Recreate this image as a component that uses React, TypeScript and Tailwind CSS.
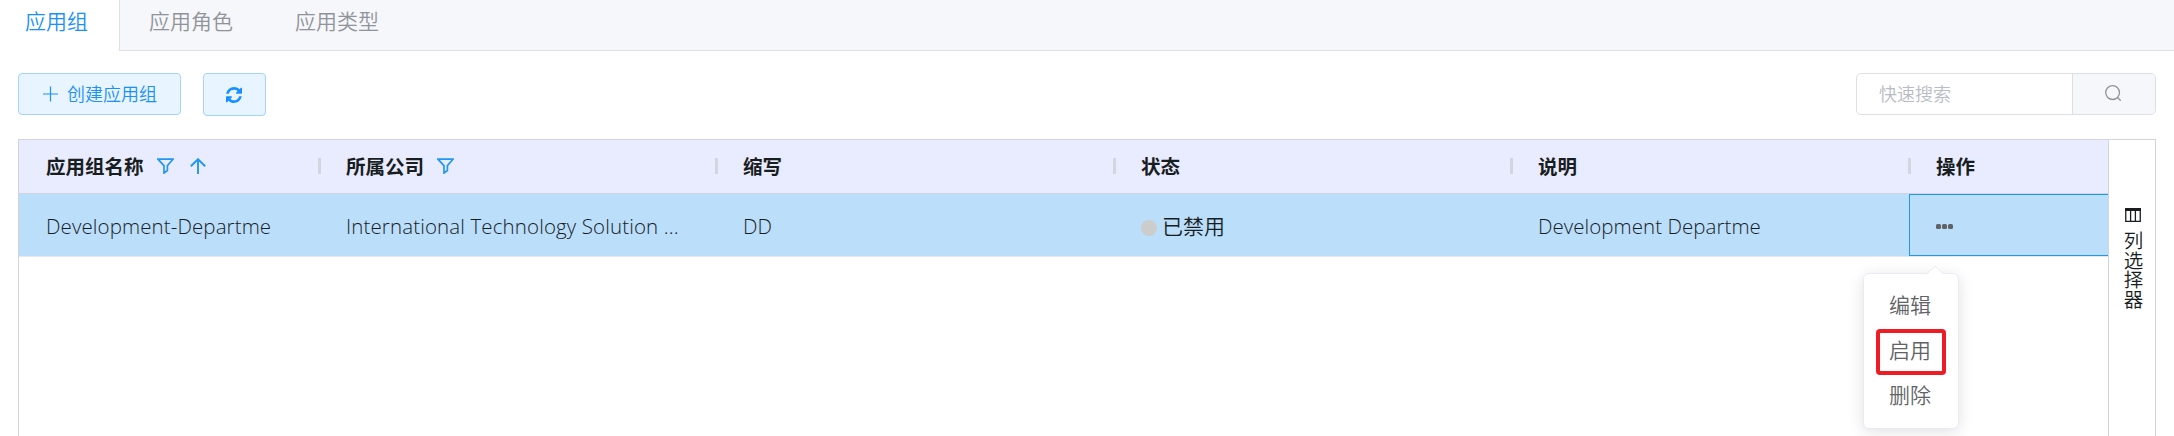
import type { ReactNode } from "react";

const latin = "font-['Open_Sans','Noto_Sans_CJK_SC',sans-serif]";

function FilterIcon() {
  return (
    <svg className="h-4 w-[17px]" viewBox="0 0 17 16" fill="none" stroke="#2196f3" strokeWidth="1.700">
      <path d="M1 1.200h15L10.400 7.600v4.900L7 15V7.600z" />
    </svg>
  );
}

function SortIcon() {
  return (
    <svg className="h-4 w-4" viewBox="0 0 16 16" fill="none" stroke="#2196f3" strokeWidth="1.900">
      <path d="M8 16V1.300M.8 8.300 8 1.200l7.200 7.100" />
    </svg>
  );
}

function RefreshIcon() {
  return (
    <svg className="mr-0.5 h-4 w-4" viewBox="0 0 1536 1536" fill="#1890ff">
      <path d="M1511 928q0 5-1 7-64 268-268 434.500T764 1536q-146 0-282.500-55T238 1324l-129 129q-19 19-45 19t-45-19-19-45V960q0-26 19-45t45-19h448q26 0 45 19t19 45-19 45l-137 137q71 66 161 102t187 36q134 0 250-65t186-179q11-17 53-117 8-23 30-23h192q13 0 22.500 9.500t9.500 22.500zm25-800v448q0 26-19 45t-45 19h-448q-26 0-45-19t-19-45 19-45l138-138Q969 256 768 256q-134 0-250 65T332 500q-11 17-53 117-8 23-30 23H50q-13 0-22.500-9.500T18 608v-7q65-268 270-434.500T768 0q146 0 284 55.500T1297 212l130-129q19-19 45-19t45 19 19 45z" />
    </svg>
  );
}

function HeaderCell({ label, width, pad = "pl-[26px]", children }: { label: string; width: string; pad?: string; children?: ReactNode }) {
  return (
    <div className={`flex shrink-0 items-start justify-between ${width}`}>
      <div className={`flex pt-[11px] ${pad}`}>
        <span className="text-[19.5px] leading-8 font-bold text-[#181d1f]">{label}</span>
        <div className="flex gap-4 pt-[7px] pl-[13px]">{children}</div>
      </div>
      <div className="mt-[18px] -mr-px h-4 w-[3px] bg-[#d3d6df]" />
    </div>
  );
}

function Cell({ width, pad = "pl-[26px]", children }: { width: string; pad?: string; children: ReactNode }) {
  return (
    <div className={`flex shrink-0 items-center pt-[3px] text-[20.5px] font-[350] whitespace-nowrap text-[#181d1f] ${pad} ${width}`}>
      {children}
    </div>
  );
}

export default function App() {
  return (
    <div className={`relative flex h-[436px] w-[2174px] flex-col overflow-hidden bg-white ${latin}`}>
      <nav className="flex h-[51px] shrink-0 text-[21px] leading-[42px] font-[350]">
        <div className="w-[119px] pl-[25px] text-[#1890ff]">应用组</div>
        <div className="flex grow gap-[62px] border-b border-l border-[#dcdfe6] bg-[#f5f7fa] pl-[29px] text-[#909399]">
          <span>应用角色</span>
          <span>应用类型</span>
        </div>
      </nav>

      <div className="flex h-[88px] shrink-0 items-start px-[18px] pt-[22px]">
        <button className="flex h-[42px] w-[163px] items-center gap-2 rounded border border-[#a3d3ff] bg-[#e8f4ff] pl-6 text-[18px] font-[350] text-[#1890ff]">
          <svg className="h-4 w-4" viewBox="0 0 16 16" fill="none" stroke="currentColor" strokeWidth="1.200">
            <path d="M7.500 .5v15M0 8h15" />
          </svg>
          <span className="whitespace-nowrap">创建应用组</span>
        </button>
        <button className="ml-[22px] flex h-[43px] w-[63px] items-center justify-center rounded border border-[#a3d3ff] bg-[#e8f4ff]">
          <RefreshIcon />
        </button>
        <div className="ml-auto flex h-[42px] w-[300px] overflow-hidden rounded-[5px] border border-[#dcdfe6]">
          <div className="flex grow items-center pl-[22px] text-[18px] font-[350] text-[#b8bcc5]">快速搜索</div>
          <div className="flex w-[83px] items-center justify-center border-l border-[#dcdfe6] bg-[#f5f7fa]">
            <svg className="mr-0.5 mb-0.5 h-4 w-4" viewBox="0 0 16 16" fill="none" stroke="#909399" strokeWidth="1.300">
              <circle cx="7.600" cy="7.600" r="6.900" />
              <path d="m12.500 12.500 3.200 3.200" />
            </svg>
          </div>
        </div>
      </div>

      <div className="mx-[18px] flex grow border border-b-0 border-[#d0d4e0]">
        <div className="w-[2089px] shrink-0 overflow-hidden">
          <div className="flex h-[54px] border-b border-[#d0d4e0] bg-[#e9ecfe]">
            <HeaderCell label="应用组名称" width="w-[301px]" pad="pl-[27px]">
              <FilterIcon />
              <SortIcon />
            </HeaderCell>
            <HeaderCell label="所属公司" width="w-[397px]">
              <FilterIcon />
            </HeaderCell>
            <HeaderCell label="缩写" width="w-[398px]" />
            <HeaderCell label="状态" width="w-[397px]" />
            <HeaderCell label="说明" width="w-[398px]" />
            <HeaderCell label="操作" width="w-[200px]" />
          </div>
          <div className="flex h-[63px] border-b border-[#e2e8f4] bg-[#bbdefb]">
            <Cell width="w-[301px]" pad="pl-[27px]">
              <span className="tracking-[0.1px]">Development-Departme</span>
            </Cell>
            <Cell width="w-[397px]">
              <span className="tracking-[0.12px]">International Technology Solution ...</span>
            </Cell>
            <Cell width="w-[398px]">DD</Cell>
            <Cell width="w-[397px]">
              <span className="mt-0.5 mr-[5px] h-4 w-4 rounded-full bg-[#cccccc]" />
              <span className="text-[21px]">已禁用</span>
            </Cell>
            <Cell width="w-[397px]">
              <span className="tracking-[0.05px]">Development Departme</span>
            </Cell>
            <div className="flex w-[220px] shrink-0 items-center gap-px border border-[#2196f3] pt-0.5 pl-[26px]">
              <span className="h-[5px] w-[5px] rounded-[1.5px] bg-[#606266]" />
              <span className="h-[5px] w-[5px] rounded-[1.5px] bg-[#606266]" />
              <span className="h-[5px] w-[5px] rounded-[1.5px] bg-[#606266]" />
            </div>
          </div>
        </div>
        <aside className="flex w-[47px] shrink-0 flex-col items-center border-l border-[#d0d4e0] pt-[68px] pl-0.5">
          <svg className="h-[14px] w-4" viewBox="0 0 16 14" fill="none" stroke="#181d1f">
            <path d="M0 1.500h16" strokeWidth="3" />
            <path d="M.75 2v11.300h14.500V2M5.600 2v11M10.400 2v11" strokeWidth="1.300" />
          </svg>
          <span className="mt-[9px] mr-0.5 text-[19.5px] leading-6 font-[350] text-[#181d1f] [writing-mode:vertical-rl]">
            列选择器
          </span>
        </aside>
      </div>

      <div className="absolute top-[273px] left-[1863px] flex h-[156px] w-24 flex-col items-start rounded-md border border-[#e6ebf5] bg-white pt-[9px] pl-[25px] text-[21px] leading-[45px] font-[350] text-[#606266] shadow-[0_3px_16px_rgba(0,0,0,0.12)]">
        <svg className="absolute -top-[9px] left-[63px] h-[10px] w-4" viewBox="0 0 16 10">
          <path d="M.5 10V8.500L8 1l7.500 7.500V10z" fill="#fff" />
          <path d="M.5 8.500 8 1l7.500 7.500" fill="none" stroke="#e6ebf5" />
        </svg>
        <span>编辑</span>
        <span>启用</span>
        <span>删除</span>
        <div className="absolute top-[55px] left-[12px] h-[46px] w-[70px] rounded-sm border-4 border-[#ee1c25]" />
      </div>
    </div>
  );
}
